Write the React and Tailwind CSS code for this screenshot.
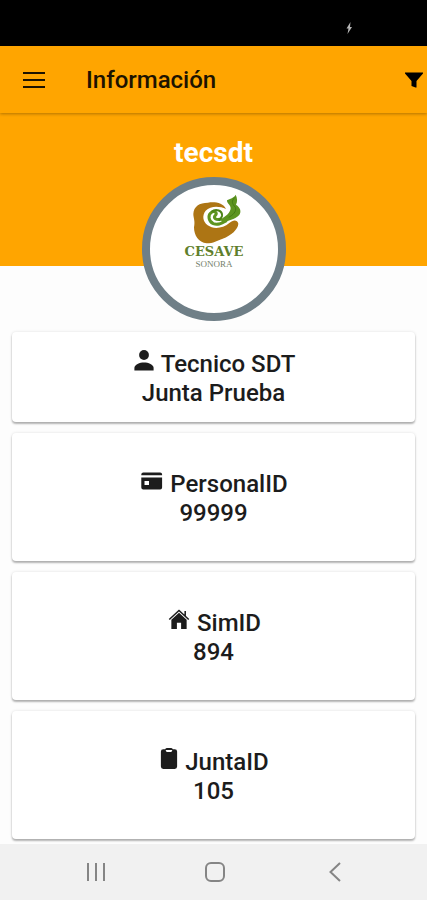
const ICONS = {
  person: (
    <>
      <ellipse cx="10" cy="5" rx="4.9" ry="5" />
      <path d="M.4 20.5v-2.4c0-3.6 5.3-5.6 9.6-5.6s9.6 2 9.6 5.6v2.4z" />
    </>
  ),
  card: (
    <>
      <path d="M.3 4.2V3.4Q.3 1.600 2.300 1.600h16.800q2 0 2 1.800v.8z" />
      <path
        fillRule="evenodd"
        d="M.3 6.500h20.800v10q0 2-2 2H2.300q-2 0-2-2zM3.500 10v4h4.500V10z"
      />
    </>
  ),
  home: (
    <>
      <path
        d="M.8 11 11 1.6 21.2 11M17.5 7V2.2"
        fill="none"
        stroke="currentColor"
        strokeWidth="1.6"
      />
      <path d="M11 3.800 3 11.200V21h5.800v-6.600h4.400V21h5.800v-9.800z" />
    </>
  ),
  clipboard: (
    <path
      fillRule="evenodd"
      d="M3 1.2h2Q5.500 0 7 0h4q1.500 0 2 1.200h2q2.500 0 2.500 2.500v15.800Q17.500 22 15 22H3Q.5 22 .5 19.500V3.700Q.5 1.200 3 1.200zM5.500 2.200q.3 2 1.500 2h4q1.200 0 1.500-2z"
    />
  ),
};

const CARDS = [
  { icon: 'person', box: '0 0 20 21', iconClass: 'w-5 h-[21px]', label: 'Tecnico SDT', value: 'Junta Prueba', pad: 'pt-[18px] pb-[14px]' },
  { icon: 'card', box: '0 0 22 20', iconClass: 'w-[22px] h-5', label: 'PersonalID', value: '99999', pad: 'pt-[37px] pb-[33px]' },
  { icon: 'home', box: '0 0 22 22', iconClass: 'w-[22px] h-[21px]', label: 'SimID', value: '894', pad: 'pt-[37px] pb-[33px]' },
  { icon: 'clipboard', box: '0 0 18 22', iconClass: 'w-[18px] h-[21px]', label: 'JuntaID', value: '105', pad: 'pt-[37px] pb-[33px]' },
];

function InfoCard({ icon, box, iconClass, label, value, pad }) {
  return (
    <section
      className={`rounded bg-white text-center text-2xl/[29px] font-medium text-[#1c1c1c] shadow-[0_2px_2px_rgba(0,0,0,0.28),0_0_3px_rgba(0,0,0,0.12)] ${pad}`}
    >
      <h2 className="flex items-end justify-center gap-[7px] pl-0.5">
        <svg viewBox={box} fill="currentColor" className={`mb-2 ${iconClass}`} aria-hidden="true">
          {ICONS[icon]}
        </svg>
        {label}
      </h2>
      <p>{value}</p>
    </section>
  );
}

function Logo() {
  return (
    <svg viewBox="0 0 128 128" className="w-full" role="img" aria-label="Cesave Sonora">
      <g transform="translate(38 5) scale(.3333)">
        <path
          d="M114 57C106 39 82 35 60 38C34 38 17 49 16 72C16 84 22 92 18 112C18 136 32 158 56 160C76 160 88 152 104 146C130 136 150 118 151 101C148 89 136 88 124 99C104 116 76 118 59 106C44 94 42 76 53 62C68 46 96 48 114 57Z"
          fill="#ad7514"
        />
        <path
          d="M100 87C84 92 74 84 82 76C90 70 80 62 72 66C58 74 61 94 76 101C90 107 102 99 116 92"
          fill="none"
          stroke="#5d9420"
          strokeWidth="9"
        />
        <path d="M70 66C84 54 104 62 102 78C101 84 97 88 92 91" fill="none" stroke="#4d8418" strokeWidth="6" />
        <path
          d="M143 14C138 24 126 26 117 31C116 40 127 44 128 54C128 68 112 80 98 88L104 101C120 90 140 90 153 76C162 64 156 52 144 44C149 34 148 24 143 14Z"
          fill="#5d9420"
        />
        <path d="M141 22C129 34 132 40 142 52C147 64 134 76 122 82" fill="none" stroke="#447a14" strokeWidth="3" />
      </g>
      <text x="64" y="71" textAnchor="middle" fontSize="13" fontWeight="700" fill="#5f7f2c" fontFamily="DejaVu Serif, serif">
        CESAVE
      </text>
      <text x="64" y="82" textAnchor="middle" fontSize="9" fill="#74806a" fontFamily="Liberation Serif, serif">
        SONORA
      </text>
    </svg>
  );
}

export default function App() {
  return (
    <div className="flex min-h-screen flex-col bg-[#fdfdfd] font-['Roboto',sans-serif]">
      <div className="flex h-[46px] items-end justify-end bg-black pr-[74px] pb-3">
        <svg viewBox="0 0 8 12" className="h-3 w-2" fill="#b5b5b5" aria-hidden="true">
          <path d="M5.500 0 1.500 6.500h2L2.500 12 7 5h-2z" />
        </svg>
      </div>
      <header className="relative flex h-[67px] items-center bg-[#ffa500] pr-1 pl-[22px] text-[#1c1300] shadow-[0_1px_3px_rgba(0,0,0,0.3)]">
        <button type="button" aria-label="Menú" className="mr-10">
          <svg viewBox="0 0 24 16" className="h-4 w-6" stroke="currentColor" strokeWidth="2" aria-hidden="true">
            <path d="M1 1h22M1 8h22M1 15h22" />
          </svg>
        </button>
        <h1 className="grow text-2xl font-medium">Información</h1>
        <button type="button" aria-label="Filtrar" className="text-black">
          <svg viewBox="0 0 18 16" className="h-4 w-[18px]" fill="currentColor" aria-hidden="true">
            <path d="M0 .5h18v1L11.500 9v6.500h-1L6.500 14V9L0 1.500z" />
          </svg>
        </button>
      </header>
      <main className="grow">
        <div className="flex h-[153px] flex-col items-center bg-[#ffa500] pt-5">
          <p className="text-[28px]/[40px] font-bold text-white">tecsdt</p>
          <div className="mt-1 size-36 shrink-0 rounded-full border-8 border-[#6f7f87] bg-white">
            <Logo />
          </div>
        </div>
        <div className="flex flex-col gap-[11px] px-3 pt-[66px] pb-[5px]">
          {CARDS.map((card) => (
            <InfoCard key={card.icon} {...card} />
          ))}
        </div>
      </main>
      <nav className="flex h-14 items-center justify-around bg-[#f1f1f1] pr-8 pl-9 text-[#858585]">
        <button type="button" aria-label="Recientes">
          <svg viewBox="0 0 20 20" className="size-5" stroke="currentColor" strokeWidth="2" aria-hidden="true">
            <path d="M2 1v18M10 1v18M18 1v18" />
          </svg>
        </button>
        <button type="button" aria-label="Inicio">
          <svg viewBox="0 0 20 20" className="size-5" fill="none" stroke="currentColor" strokeWidth="2" aria-hidden="true">
            <rect x="1" y="1" width="18" height="18" rx="5" />
          </svg>
        </button>
        <button type="button" aria-label="Atrás">
          <svg viewBox="0 0 20 20" className="size-5" fill="none" stroke="currentColor" strokeWidth="2" aria-hidden="true">
            <path d="m15 1-9.500 9 9.500 9" />
          </svg>
        </button>
      </nav>
    </div>
  );
}
